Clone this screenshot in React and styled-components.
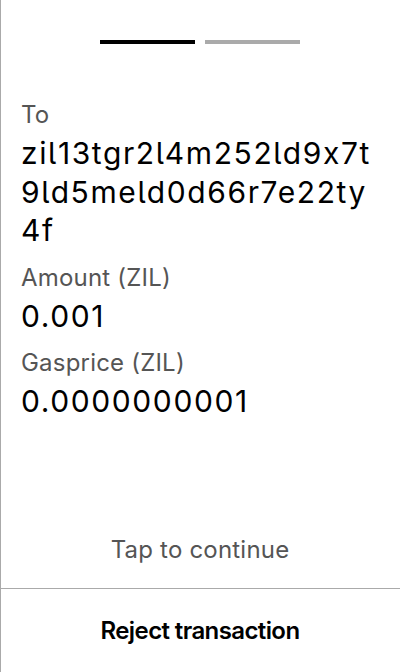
import React from "react";
import styled, { createGlobalStyle } from "styled-components";

const Global = createGlobalStyle`
  html, body { margin: 0; padding: 0; background: #fff; }
  body { font-family: Inter, "Noto Sans", sans-serif; font-feature-settings: "cv05" 1, "calt" 0; }
`;

const Screen = styled.div`
  box-sizing: border-box;
  width: 400px;
  height: 672px;
  box-shadow: inset 1px 0 0 #aaaaaa;
  display: flex;
  flex-direction: column;
  background: #fff;
`;

const Progress = styled.div`
  display: flex;
  justify-content: center;
  gap: 10px;
  margin-top: 40px;
`;

const Step = styled.div`
  width: 95px;
  height: 4px;
  background: ${(p) => (p.$active ? "#000" : "#aaaaaa")};
`;

const Details = styled.div`
  display: flex;
  flex-direction: column;
  padding: 0 20px 0 21px;
  margin-top: 56px;
`;

const Label = styled.div`
  font-size: 24px;
  line-height: 29px;
  letter-spacing: 0.2px;
  color: #555;
  margin-bottom: 5px;
`;

const Value = styled.div`
  font-size: 30px;
  line-height: 38.5px;
  letter-spacing: 1.6px;
  color: #000;
  word-break: break-all;
  margin-bottom: 13px;
`;

const Spacer = styled.div`
  flex: 1;
`;

const Hint = styled.div`
  text-align: center;
  font-size: 24px;
  line-height: 29px;
  letter-spacing: 0.2px;
  color: #555;
  margin-bottom: 24px;
`;

const Divider = styled.div`
  height: 1px;
  background: #aaaaaa;
`;

const RejectButton = styled.button`
  height: 83px;
  padding: 0;
  border: none;
  background: transparent;
  font-family: inherit;
  font-feature-settings: inherit;
  font-size: 24px;
  font-weight: 600;
  letter-spacing: -0.6px;
  color: #000;
  cursor: pointer;
`;

export default function App() {
  return (
    <>
      <Global />
      <Screen>
        <Progress>
          <Step $active />
          <Step />
        </Progress>
        <Details>
          <Label>To</Label>
          <Value>zil13tgr2l4m252ld9x7t9ld5meld0d66r7e22ty4f</Value>
          <Label>Amount (ZIL)</Label>
          <Value>0.001</Value>
          <Label>Gasprice (ZIL)</Label>
          <Value>0.0000000001</Value>
        </Details>
        <Spacer />
        <Hint>Tap to continue</Hint>
        <Divider />
        <RejectButton>Reject transaction</RejectButton>
      </Screen>
    </>
  );
}
